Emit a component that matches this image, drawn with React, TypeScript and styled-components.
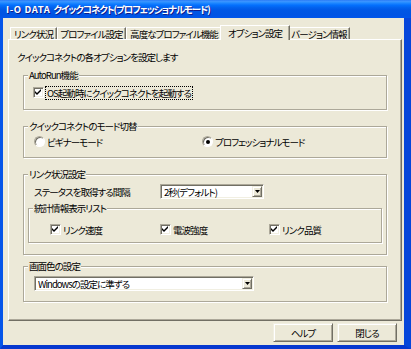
import styled, { createGlobalStyle } from 'styled-components';

const GlobalStyle = createGlobalStyle`
  html, body {
    margin: 0;
    padding: 0;
    background: #ECE9D8;
  }
  body {
    font-family: "Noto Sans CJK JP", "Noto Sans", sans-serif;
    font-size: 9.5px;
    letter-spacing: -0.95px;
    color: #000;
    font-feature-settings: "palt";
  }
`;

const Window = styled.div`
  width: 411px;
  height: 349px;
  display: flex;
  flex-direction: column;
  overflow: hidden;
`;

const TitleBar = styled.div`
  height: 18px;
  flex: none;
  display: flex;
  align-items: center;
  padding: 0 6px;
  background: linear-gradient(to bottom, #2C7BF5 0%, #3A93FF 8%, #288EFF 14%, #127DFF 22%, #036FFC 30%, #0262EE 42%, #0057E5 56%, #0054E3 80%, #0055EB 100%);
  color: #fff;
  font-weight: bold;
  font-size: 9.5px;
  text-shadow: 1px 1px 0 #0F1C8A;
  white-space: nowrap;
`;

const TitleLatin = styled.span`
  letter-spacing: 0.6px;
  margin-right: 3px;
`;

const TitleKana = styled.span`
  letter-spacing: -1.1px;
`;

const Frame = styled.div`
  flex: 1;
  display: flex;
  flex-direction: column;
  border-left: 3px solid #0555E9;
  border-right: 7px solid #0646DA;
  border-bottom: 4px solid #0638CF;
  background: #ECE9D8;
  padding: 7px 2px 0 5px;
`;

const TabStrip = styled.div`
  height: 14px;
  display: flex;
  align-items: flex-end;
  padding-left: 2px;
  position: relative;
  z-index: 1;
`;

const Tab = styled.div<{ $active?: boolean; $width: number }>`
  width: ${p => p.$width + (p.$active ? 4 : 0)}px;
  height: ${p => (p.$active ? 15 : 12)}px;
  box-sizing: border-box;
  margin: 0 ${p => (p.$active ? -2 : 0)}px ${p => (p.$active ? -1 : 0)}px;
  position: relative;
  z-index: ${p => (p.$active ? 2 : 1)};
  display: flex;
  align-items: center;
  justify-content: center;
  line-height: 12px;
  white-space: nowrap;
  background: #ECE9D8;
  border-top: 1px solid #fff;
  border-left: 1px solid #fff;
  border-right: 1px solid #716F64;
  box-shadow: inset -1px 0 0 #ACA899;
`;

const Panel = styled.div`
  height: 282px;
  box-sizing: border-box;
  border-top: 1px solid #fff;
  border-left: 1px solid #fff;
  border-right: 1px solid #716F64;
  border-bottom: 1px solid #716F64;
  box-shadow: inset -1px -1px 0 #ACA899;
  padding-top: 11px;
  display: flex;
  flex-direction: column;
`;

const Intro = styled.div`
  margin-left: 8px;
  line-height: 12px;
  height: 12px;
`;

const Groups = styled.div`
  margin-left: 14px;
  width: 364px;
  display: flex;
  flex-direction: column;
`;

const Group = styled.fieldset<{ $gap: number }>`
  margin: ${p => p.$gap}px 0 0 0;
  padding: 0;
  border: 1px solid #ACA899;
  box-shadow: inset 1px 1px 0 #fff, 1px 1px 0 #fff;
  min-width: 0;
`;

const Legend = styled.legend`
  margin-left: 4px;
  padding: 0 1px;
  height: 12px;
  line-height: 12px;
  background: #ECE9D8;
`;

const GroupBody = styled.div<{ $pad: string }>`
  padding: ${p => p.$pad};
`;

const Row = styled.div`
  display: flex;
  align-items: center;
  height: 13px;
`;

const FieldRow = styled.div`
  display: flex;
  align-items: center;
  height: 15px;
`;

const Choices = styled.div<{ $cols: string }>`
  display: grid;
  grid-template-columns: ${p => p.$cols};
  align-items: center;
  height: 13px;
`;

const Option = styled.label`
  display: flex;
  align-items: center;
  gap: 2px;
  line-height: 12px;
  white-space: nowrap;
`;

const Box = styled.span`
  width: 11px;
  height: 11px;
  box-sizing: border-box;
  flex: none;
  background: #fff;
  border-top: 1px solid #ACA899;
  border-left: 1px solid #ACA899;
  border-right: 1px solid #fff;
  border-bottom: 1px solid #fff;
  box-shadow: inset 1px 1px 0 #716F64, inset -1px -1px 0 #F1EFE2;
  display: flex;
  align-items: center;
  justify-content: center;
`;

const Round = styled.span`
  width: 11px;
  height: 11px;
  box-sizing: border-box;
  flex: none;
  border-radius: 50%;
  background: #fff;
  border: 1px solid;
  border-color: #ACA899 #fff #fff #ACA899;
  box-shadow: inset 1px 1px 0 #716F64;
  display: flex;
  align-items: center;
  justify-content: center;
`;

const Dot = styled.span`
  width: 4px;
  height: 4px;
  border-radius: 50%;
  background: #000;
`;

const Focus = styled.span`
  outline: 1px dotted #000;
  padding: 0 1px;
`;

const FieldLabel = styled.span`
  width: 132px;
  padding-left: 6px;
  box-sizing: border-box;
  line-height: 12px;
  white-space: nowrap;
`;

const Select = styled.div<{ $width: number }>`
  width: ${p => p.$width}px;
  height: 15px;
  box-sizing: border-box;
  display: flex;
  align-items: center;
  background: #fff;
  border-top: 1px solid #ACA899;
  border-left: 1px solid #ACA899;
  border-right: 1px solid #fff;
  border-bottom: 1px solid #fff;
  box-shadow: inset 1px 1px 0 #716F64, inset -1px -1px 0 #F1EFE2;
  padding: 1px;
`;

const SelectText = styled.span`
  flex: 1;
  padding-left: 2px;
  line-height: 12px;
  white-space: nowrap;
`;

const Arrow = styled.span`
  width: 10px;
  height: 11px;
  box-sizing: border-box;
  background: #ECE9D8;
  border-top: 1px solid #F1EFE2;
  border-left: 1px solid #F1EFE2;
  border-right: 1px solid #716F64;
  border-bottom: 1px solid #716F64;
  box-shadow: inset 1px 1px 0 #fff, inset -1px -1px 0 #ACA899;
  display: flex;
  align-items: center;
  justify-content: center;
`;

const Buttons = styled.div`
  display: flex;
  justify-content: flex-end;
  gap: 4px;
  padding: 2px 5px 0 0;
`;

const Button = styled.button`
  width: 60px;
  height: 19px;
  box-sizing: border-box;
  padding: 0;
  font: inherit;
  letter-spacing: inherit;
  font-feature-settings: "palt";
  color: #000;
  background: #ECE9D8;
  border-top: 1px solid #F1EFE2;
  border-left: 1px solid #F1EFE2;
  border-right: 1px solid #716F64;
  border-bottom: 1px solid #716F64;
  box-shadow: inset 1px 1px 0 #fff, inset -1px -1px 0 #ACA899;
  border-radius: 0;
`;

const Check = () => (
  <Box>
    <svg width="7" height="7" viewBox="0 0 7 7">
      <path d="M0 2 L2 4 L6 0 L6 2 L2 6 L0 4 Z" fill="#000" />
    </svg>
  </Box>
);

const Radio = ({ on }: { on?: boolean }) => <Round>{on && <Dot />}</Round>;

const DropDown = ({ width, value }: { width: number; value: string }) => (
  <Select $width={width}>
    <SelectText>{value}</SelectText>
    <Arrow>
      <svg width="5" height="3" viewBox="0 0 5 3">
        <path d="M0 0 H5 L2.5 3 Z" fill="#000" />
      </svg>
    </Arrow>
  </Select>
);

const tabs = [
  { label: 'リンク状況', width: 47 },
  { label: 'プロファイル設定', width: 69 },
  { label: '高度なプロファイル機能', width: 96 },
  { label: 'オプション設定', width: 66, active: true },
  { label: 'バージョン情報', width: 62 },
];

export default function App() {
  return (
    <>
      <GlobalStyle />
      <Window>
        <TitleBar>
          <TitleLatin>I-O DATA</TitleLatin>
          <TitleKana>クイックコネクト(プロフェッショナルモード)</TitleKana>
        </TitleBar>
        <Frame>
          <TabStrip>
            {tabs.map(t => (
              <Tab key={t.label} $width={t.width} $active={t.active}>{t.label}</Tab>
            ))}
          </TabStrip>
          <Panel>
            <Intro>クイックコネクトの各オプションを設定します</Intro>
            <Groups>
              <Group $gap={6}>
                <Legend>AutoRun機能</Legend>
                <GroupBody $pad="5px 0 10px 9px">
                  <Row>
                    <Option>
                      <Check />
                      <Focus>OS起動時にクイックコネクトを起動する</Focus>
                    </Option>
                  </Row>
                </GroupBody>
              </Group>

              <Group $gap={10}>
                <Legend>クイックコネクトのモード切替</Legend>
                <GroupBody $pad="3px 0 9px 10px">
                  <Choices $cols="168px auto">
                    <Option><Radio />ビギナーモード</Option>
                    <Option><Radio on />プロフェッショナルモード</Option>
                  </Choices>
                </GroupBody>
              </Group>

              <Group $gap={10}>
                <Legend>リンク状況設定</Legend>
                <GroupBody $pad="4px 4px 11px 4px">
                  <FieldRow>
                    <FieldLabel>ステータスを取得する間隔</FieldLabel>
                    <DropDown width={104} value="2秒(デフォルト)" />
                  </FieldRow>
                  <Group $gap={3}>
                    <Legend>統計情報表示リスト</Legend>
                    <GroupBody $pad="9px 0 6px 21px">
                      <Choices $cols="110px 109px auto">
                        <Option><Check />リンク速度</Option>
                        <Option><Check />電波強度</Option>
                        <Option><Check />リンク品質</Option>
                      </Choices>
                    </GroupBody>
                  </Group>
                </GroupBody>
              </Group>

              <Group $gap={5}>
                <Legend>画面色の設定</Legend>
                <GroupBody $pad="4px 0 10px 10px">
                  <DropDown width={220} value="Windowsの設定に準ずる" />
                </GroupBody>
              </Group>
            </Groups>
          </Panel>
          <Buttons>
            <Button>ヘルプ</Button>
            <Button>閉じる</Button>
          </Buttons>
        </Frame>
      </Window>
    </>
  );
}
